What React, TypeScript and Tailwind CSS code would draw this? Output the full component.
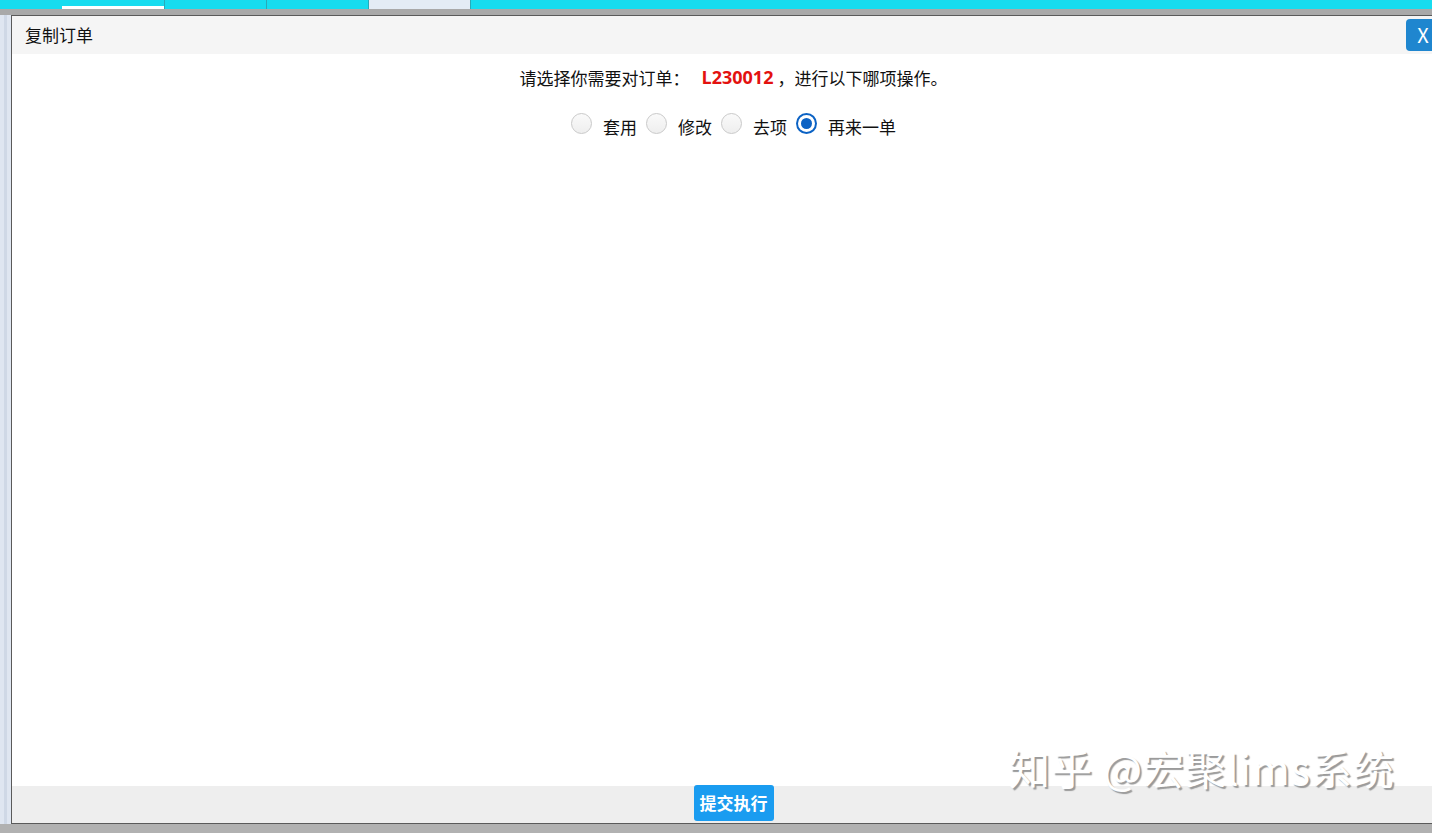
import { useState } from 'react'

const options = ['套用', '修改', '去项', '再来一单']

function Radio({ checked }: { checked: boolean }) {
  if (checked) {
    return (
      <span className="w-[21px] h-[21px] rounded-full bg-[#0b62c4] flex items-center justify-center shrink-0">
        <span className="w-[17px] h-[17px] rounded-full bg-white flex items-center justify-center">
          <span className="w-[11px] h-[11px] rounded-full bg-[#0b62c4]" />
        </span>
      </span>
    )
  }
  return (
    <span className="w-[21px] h-[21px] rounded-full border border-[#c9c9c9] bg-gradient-to-b from-[#fafafa] to-[#eeeeee] shrink-0" />
  )
}

export default function App() {
  const [selected, setSelected] = useState('再来一单')

  return (
    <div
      className="w-[1432px] h-[833px] overflow-hidden bg-[#b1b1b1] flex flex-col"
      style={{ fontFamily: '"Microsoft YaHei", "Noto Sans CJK SC", "Noto Sans", sans-serif' }}
    >
      {/* top tab strip */}
      <div className="h-[9px] bg-[#17dcef] flex shrink-0">
        <div className="w-[62px]" />
        <div className="w-[102px] border-b-[3px] border-white" />
        <div className="w-px bg-[#2aa9b8]" />
        <div className="w-[101px]" />
        <div className="w-px bg-[#2aa9b8]" />
        <div className="w-[101px]" />
        <div className="w-px bg-[#2aa9b8]" />
        <div className="w-[101px] bg-[#e4ecf5]" />
        <div className="w-px bg-[#2aa9b8]" />
      </div>
      <div className="h-[6px] bg-[#a9a9a9] shrink-0" />

      <div className="flex flex-1 min-h-0">
        {/* left sidebar edge */}
        <div className="w-[11px] shrink-0 bg-[#dfe6f1] flex">
          <div className="w-[4px]" />
          <div className="w-[3px] bg-[#cfd8e6]" />
        </div>

        {/* dialog */}
        <div className="w-[1444px] shrink-0 flex flex-col bg-white border-l border-t border-b border-[#5a5a5a]">
          <div className="h-[38px] bg-[#f5f5f5] flex items-center justify-between pl-[13px] pr-[15px] shrink-0">
            <span className="text-[17px] text-[#111]">复制订单</span>
            <button className="w-[34px] h-[32px] rounded-[4px] bg-[#1f86cf] text-white text-[20px] leading-none flex items-center justify-center">
              X
            </button>
          </div>

          <div className="flex-1 flex flex-col items-center relative">
            <p className="mt-[10px] text-[17px] text-[#111] flex items-center">
              请选择你需要对订单：
              <span className="ml-[12px] text-[#e3110f] font-bold text-[18px]" style={{ fontFamily: '"Open Sans", "Noto Sans", sans-serif' }}>
                L230012
              </span>
              <span className="ml-[4px]">，</span>
              <span>进行以下哪项操作。</span>
            </p>

            <div className="mt-[17px] flex items-center text-[17px] text-[#111] ml-[9px]">
              {options.map((o) => (
                <label
                  key={o}
                  className="flex items-center cursor-pointer mr-[9px]"
                  onClick={() => setSelected(o)}
                >
                  <Radio checked={selected === o} />
                  <span className="ml-[11px] mt-[6px]">{o}</span>
                </label>
              ))}
            </div>

            {/* watermark */}
            <div
              className="absolute right-[60px] bottom-[-12px] text-[41px] text-white tracking-[1px] select-none"
              style={{ textShadow: '2px 2px 1px #9a9a9a' }}
            >
              知乎 @宏聚lims系统
            </div>
          </div>

          <div className="h-[37px] bg-[#eeeeee] flex items-center justify-center shrink-0">
            <button className="h-[36px] -mt-[3px] px-[6px] rounded-[3px] bg-[#1a9cf0] text-white font-bold text-[17px]">
              提交执行
            </button>
          </div>
        </div>
      </div>
      <div className="h-[9px] shrink-0" />
    </div>
  )
}
